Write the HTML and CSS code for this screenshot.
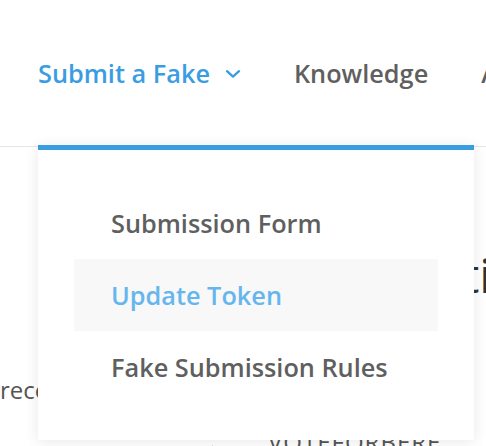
FILE: index.html
```html
<!DOCTYPE html>
<html>
<head>
<meta charset="utf-8">
<link rel="stylesheet" href="styles.css">
</head>
<body>
<header class="site-header">
  <nav class="main-nav">
    <div class="nav-item has-menu active">
      <span class="nav-link">Submit a Fake</span>
      <svg class="chevron" width="16" height="10" viewBox="0 0 16 10"><path d="M2 2.2 L8 7.6 L14 2.2" fill="none" stroke="currentColor" stroke-width="2.4" stroke-linecap="round" stroke-linejoin="round"/></svg>
      <div class="dropdown">
        <a class="dd-item">Submission Form</a>
        <a class="dd-item hover">Update Token</a>
        <a class="dd-item">Fake Submission Rules</a>
      </div>
    </div>
    <div class="nav-item"><span class="nav-link">Knowledge</span></div>
    <div class="nav-item"><span class="nav-link">About</span></div>
  </nav>
</header>
<main class="content">
  <div class="col-left">
    <p class="intro">recommend</p>
  </div>
  <div class="col-right">
    <h1 class="title">Verification</h1>
    <p class="tag">VOTEFORBERE</p>
  </div>
</main>
</body>
</html>
```
FILE: styles.css
```css
* { box-sizing: border-box; }
html, body { margin: 0; padding: 0; }
body {
  width: 486px;
  height: 446px;
  overflow: hidden;
  background: #fff;
  font-family: "Open Sans", "Liberation Sans", sans-serif;
  color: #5f5f5f;
}
.site-header {
  height: 147px;
  border-bottom: 1px solid #e6e6e6;
  display: flex;
  align-items: center;
}
.main-nav {
  display: flex;
  align-items: center;
  padding-left: 38px;
  white-space: nowrap;
  gap: 53px;
  margin-top: -1px;
}
.nav-item {
  display: flex;
  align-items: center;
  font-size: 25.3px;
  font-weight: 600;
  color: #5f5f5f;
}
.has-menu { position: relative; }
.active { color: #3a9de2; }
.chevron {
  margin-left: 15px;
  margin-top: 2px;
  color: #3a9de2;
}
.dropdown {
  position: absolute;
  left: 0;
  top: 89px;
  width: 436px;
  background: #fff;
  border-top: 5px solid #3a9de2;
  box-shadow: 0 2px 14px rgba(0,0,0,0.09);
  padding: 37px 36px 37px;
  display: flex;
  flex-direction: column;
  z-index: 10;
}
.dd-item {
  height: 72px;
  display: flex;
  align-items: center;
  padding-left: 37px;
  font-size: 25.3px;
  font-weight: 600;
  color: #5f5f5f;
}
.dd-item.hover {
  background: #f8f8f8;
  color: #66b6ee;
}
.content {
  display: grid;
  grid-template-columns: 212px 1fr;
}
.col-left { padding-top: 226px; }
.intro {
  margin: 0;
  font-size: 24px;
  color: #555;
}
.col-right {
  border-left: 1px solid #dcdcdc;
  margin-top: 298px;
  padding-left: 55px;
}
.title {
  margin: -203px 0 0 29px;
  font-size: 48px;
  font-weight: 400;
  color: #333;
  white-space: nowrap;
}
.tag {
  margin: 118px 0 0;
  font-size: 24px;
  letter-spacing: 1px;
  color: #555;
}
```
